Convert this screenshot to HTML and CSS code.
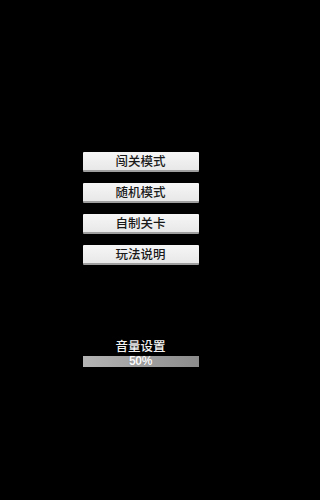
FILE: index.html
```html
<!DOCTYPE html>
<html lang="zh">
<head>
<meta charset="utf-8">
<link rel="stylesheet" href="styles.css">
</head>
<body>
<div class="screen">
  <div class="menu">
    <div class="btn">闯关模式</div>
    <div class="btn">随机模式</div>
    <div class="btn">自制关卡</div>
    <div class="btn">玩法说明</div>
  </div>
  <div class="volume">
    <div class="vol-label">音量设置</div>
    <div class="bar"><span class="bar-text">50%</span></div>
  </div>
</div>
</body>
</html>
```

FILE: styles.css
```css
html, body {
  margin: 0;
  padding: 0;
  background: #000;
}
.screen {
  width: 281px;
  height: 500px;
  display: flex;
  flex-direction: column;
  align-items: center;
  font-family: "Noto Sans CJK SC", "Noto Sans", sans-serif;
  padding-top: 152px;
  box-sizing: border-box;
}
.menu {
  display: flex;
  flex-direction: column;
  gap: 11px;
}
.btn {
  width: 116px;
  height: 20px;
  box-sizing: border-box;
  background: linear-gradient(#f6f6f6, #e8e8e8);
  border-bottom: 2px solid #9e9e9e;
  border-radius: 1px;
  color: #1a1a1a;
  font-size: 12.5px;
  font-weight: 500;
  line-height: 18px;
  text-align: center;
}
.volume {
  margin-top: 73px;
  display: flex;
  flex-direction: column;
  align-items: center;
}
.vol-label {
  color: #f2f2f2;
  font-size: 12.5px;
  font-weight: 500;
  line-height: 16px;
}
.bar {
  margin-top: 2px;
  width: 116px;
  height: 11px;
  background: linear-gradient(to right, #b4b4b4, #8c8c8c);
  display: flex;
  align-items: center;
  justify-content: center;
}
.bar-text {
  color: #fafafa;
  font-family: "Liberation Sans", sans-serif;
  font-weight: bold;
  font-size: 12px;
  line-height: 11px;
  letter-spacing: -0.3px;
  text-shadow: 0 0 1px #777;
}
```
